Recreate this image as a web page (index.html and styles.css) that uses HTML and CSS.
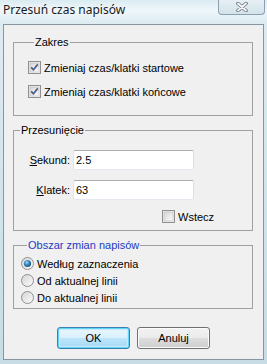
FILE: index.html
```html
<!DOCTYPE html>
<html lang="pl">
<head>
    <meta charset="UTF-8">
    <title>Przesuń czas napisów</title>
    <link rel="stylesheet" href="styles.css">
</head>
<body>
    <div class="window">
        <div class="titlebar">
            <span class="title">Przesuń czas napisów</span>
            <span class="close-btn">
                <svg width="12" height="10" viewBox="0 0 12 10">
                    <path d="M2 1.5 L10 8.5 M10 1.5 L2 8.5" stroke="#6d7680" stroke-width="3.6" stroke-linecap="round"/>
                    <path d="M2 1.5 L10 8.5 M10 1.5 L2 8.5" stroke="#fbfdfe" stroke-width="1.8" stroke-linecap="round"/>
                </svg>
            </span>
        </div>

        <div class="client">
            <fieldset class="group group-range">
                <legend>Zakres</legend>
                <div class="check-row">
                    <svg class="checkbox" width="13" height="13" viewBox="0 0 13 13">
                        <rect x="0.5" y="0.5" width="12" height="12" fill="#f4f4f4" stroke="#8f8f8f"/>
                        <rect x="2" y="2" width="9" height="9" fill="url(#boxFill)" stroke="#b9b9b9" stroke-width="0.6"/>
                        <path d="M3.2 6.4 L5.4 8.8 L9.8 3.4" fill="none" stroke="#4c5f8a" stroke-width="1.7"/>
                        <defs>
                            <linearGradient id="boxFill" x1="0" y1="0" x2="1" y2="1">
                                <stop offset="0" stop-color="#d6d6d6"/>
                                <stop offset="1" stop-color="#fbfbfb"/>
                            </linearGradient>
                        </defs>
                    </svg>
                    <span>Zmieniaj czas/klatki startowe</span>
                </div>
                <div class="check-row">
                    <svg class="checkbox" width="13" height="13" viewBox="0 0 13 13">
                        <rect x="0.5" y="0.5" width="12" height="12" fill="#f4f4f4" stroke="#8f8f8f"/>
                        <rect x="2" y="2" width="9" height="9" fill="url(#boxFill)" stroke="#b9b9b9" stroke-width="0.6"/>
                        <path d="M3.2 6.4 L5.4 8.8 L9.8 3.4" fill="none" stroke="#4c5f8a" stroke-width="1.7"/>
                    </svg>
                    <span>Zmieniaj czas/klatki końcowe</span>
                </div>
            </fieldset>

            <fieldset class="group group-shift">
                <legend>Przesunięcie</legend>
                <div class="field-row">
                    <span class="field-label"><u>S</u>ekund:</span>
                    <span class="text-input">2.5</span>
                </div>
                <div class="field-row">
                    <span class="field-label"><u>K</u>latek:</span>
                    <span class="text-input">63</span>
                </div>
                <div class="check-row back-row">
                    <svg class="checkbox" width="13" height="13" viewBox="0 0 13 13">
                        <rect x="0.5" y="0.5" width="12" height="12" fill="#f4f4f4" stroke="#8f8f8f"/>
                        <rect x="2" y="2" width="9" height="9" fill="url(#boxFill)" stroke="#b9b9b9" stroke-width="0.6"/>
                    </svg>
                    <span>Wstecz</span>
                </div>
            </fieldset>

            <fieldset class="group group-area">
                <legend class="legend-blue">Obszar zmian napisów</legend>
                <div class="radio-row">
                    <svg class="radio" width="13" height="13" viewBox="0 0 13 13">
                        <defs>
                            <linearGradient id="radioFill" x1="0" y1="0" x2="1" y2="1">
                                <stop offset="0" stop-color="#d4d4d4"/>
                                <stop offset="1" stop-color="#fcfcfc"/>
                            </linearGradient>
                            <radialGradient id="dotFill" cx="0.4" cy="0.35" r="0.7">
                                <stop offset="0" stop-color="#9fdcf8"/>
                                <stop offset="0.45" stop-color="#3b8cc4"/>
                                <stop offset="1" stop-color="#1a4a78"/>
                            </radialGradient>
                        </defs>
                        <circle cx="6.5" cy="6.5" r="6" fill="url(#radioFill)" stroke="#8f8f8f"/>
                        <circle cx="6.5" cy="6.5" r="3.6" fill="url(#dotFill)"/>
                    </svg>
                    <span>Według zaznaczenia</span>
                </div>
                <div class="radio-row">
                    <svg class="radio" width="13" height="13" viewBox="0 0 13 13">
                        <circle cx="6.5" cy="6.5" r="6" fill="url(#radioFill)" stroke="#8f8f8f"/>
                    </svg>
                    <span>Od aktualnej linii</span>
                </div>
                <div class="radio-row">
                    <svg class="radio" width="13" height="13" viewBox="0 0 13 13">
                        <circle cx="6.5" cy="6.5" r="6" fill="url(#radioFill)" stroke="#8f8f8f"/>
                    </svg>
                    <span>Do aktualnej linii</span>
                </div>
            </fieldset>

            <div class="buttons">
                <button class="btn btn-default">OK</button>
                <button class="btn">Anuluj</button>
            </div>
        </div>
    </div>
</body>
</html>
```

FILE: styles.css
```css
body {
    margin: 0;
    font-family: "Liberation Sans", Arial, sans-serif;
    font-size: 11px;
    color: #000;
}

.window {
    width: 267px;
    height: 364px;
    background: linear-gradient(to bottom, #d9ebf2 0, #eef7fa 10px, #dcebf1 24px, #c8dce5 100%);
    display: flex;
    flex-direction: column;
}

.titlebar {
    height: 24px;
    display: flex;
    align-items: flex-start;
}

.title {
    font-family: "Noto Sans", sans-serif;
    font-size: 12px;
    line-height: 16px;
    margin: 2px 0 0 3px;
    color: #1b1b1b;
    text-shadow: 0 0 6px #fff;
}

.close-btn {
    margin-left: auto;
    margin-right: 2px;
    width: 45px;
    height: 14px;
    border: 1px solid #8ca0b1;
    border-top: none;
    border-radius: 0 0 4px 4px;
    background: linear-gradient(to bottom, #e6eff4, #d3e2ea);
    display: flex;
    align-items: center;
    justify-content: center;
}

.client {
    margin-left: 3px;
    width: 261px;
    height: 336px;
    box-sizing: border-box;
    border: 1px solid #8696a3;
    background: #f0f0f0;
}

.group {
    box-sizing: border-box;
    width: 240px;
    margin: 8px 0 0 9px;
    padding: 0;
    border: 1px solid #a0a0a0;
    min-inline-size: 0;
}

.group legend {
    margin-left: 6px;
    padding: 0 1px;
    font-size: 11px;
    line-height: 13px;
}

.legend-blue {
    color: #1f3bc2;
}

.group-range {
    margin-top: 11px;
    padding: 12px 0 17px 14px;
}

.check-row {
    display: flex;
    align-items: center;
    gap: 3px;
    height: 13px;
}

.check-row + .check-row {
    margin-top: 11px;
}

.checkbox,
.radio {
    display: block;
    flex: none;
}

.group-shift {
    padding: 13px 0 7px 0;
}

.field-row {
    display: flex;
    align-items: center;
    height: 20px;
}

.field-row + .field-row {
    margin-top: 10px;
}

.field-label {
    width: 56px;
    margin-right: 3px;
    text-align: right;
}

.text-input {
    box-sizing: border-box;
    width: 121px;
    height: 20px;
    padding-left: 2px;
    line-height: 18px;
    background: #fff;
    border: 1px solid;
    border-color: #abadb3 #dbdfe6 #e3e9ef #e2e3ea;
    border-radius: 2px;
}

.back-row {
    margin-top: 10px;
    margin-left: 148px;
}

.group-area {
    padding: 5px 0 4px 7px;
}

.radio-row {
    display: flex;
    align-items: center;
    gap: 3px;
    height: 13px;
}

.radio-row + .radio-row {
    margin-top: 4px;
}

.buttons {
    display: flex;
    justify-content: center;
    gap: 7px;
    margin-top: 18px;
}

.btn {
    width: 73px;
    height: 22px;
    padding: 0;
    font-family: "Liberation Sans", Arial, sans-serif;
    font-size: 11px;
    color: #000;
    border: 1px solid #707070;
    border-radius: 3px;
    background: linear-gradient(to bottom, #f2f2f2 0, #ebebeb 50%, #dddddd 50%, #cfcfcf 100%);
    box-shadow: inset 0 0 0 1px #fbfbfb;
}

.btn-default {
    border-color: #3c7fb1;
    background: linear-gradient(to bottom, #eaf6fd 0, #d9f0fc 50%, #bee6fd 50%, #a7d9f5 100%);
    box-shadow: inset 0 0 0 1px #5fd3f8, inset 0 0 0 2px #c6ecfb;
}
```
